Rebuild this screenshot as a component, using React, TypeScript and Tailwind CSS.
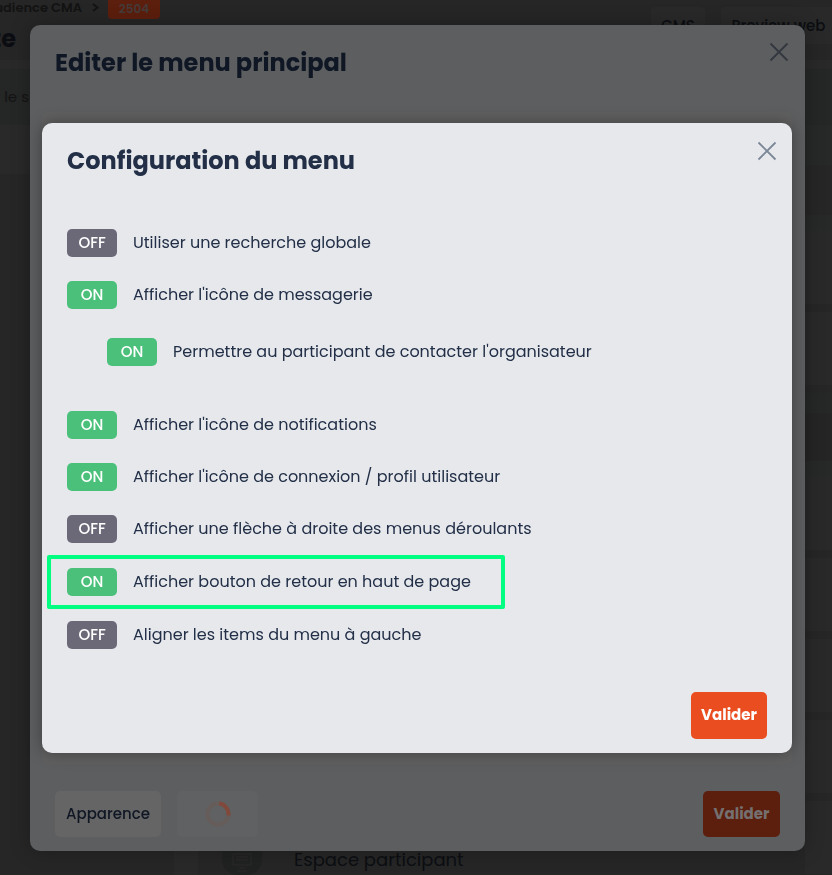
interface Option {
  id: string;
  label: string;
  on: boolean;
  nested?: boolean;
  highlighted?: boolean;
}

const options: Option[] = [
  { id: 'search', label: 'Utiliser une recherche globale', on: false },
  { id: 'messages', label: "Afficher l'icône de messagerie", on: true },
  { id: 'contact', label: "Permettre au participant de contacter l'organisateur", on: true, nested: true },
  { id: 'notifications', label: "Afficher l'icône de notifications", on: true },
  { id: 'profile', label: "Afficher l'icône de connexion / profil utilisateur", on: true },
  { id: 'arrow', label: 'Afficher une flèche à droite des menus déroulants', on: false },
  { id: 'top', label: 'Afficher bouton de retour en haut de page', on: true, highlighted: true },
  { id: 'left', label: 'Aligner les items du menu à gauche', on: false },
];

const CloseButton = ({ className }: { className: string }) => (
  <button type="button" aria-label="Fermer" className={className}>
    <svg width="20" height="20" viewBox="0 0 20 20" fill="none" stroke="currentColor" strokeWidth="1.8">
      <path d="M1.5 1.5 18.5 18.5M18.5 1.5 1.5 18.5" />
    </svg>
  </button>
);

const rowClass = (option: Option) => {
  if (option.highlighted) {
    return '-ml-5 flex h-[54px] w-[458px] max-w-full items-center rounded-xs border-4 border-[#00ff80] pl-4';
  }
  if (option.nested) return 'mt-1 mb-5 ml-10 flex h-[54px] items-center';
  return 'flex h-[52px] items-center';
};

const OptionRow = ({ option }: { option: Option }) => (
  <li className={rowClass(option)}>
    <button
      type="button"
      role="switch"
      aria-checked={option.on}
      aria-labelledby={option.id}
      className={`h-7 w-[50px] shrink-0 rounded-[5px] text-[15px] font-medium text-white ${
        option.on ? 'bg-[#4bc07a]' : 'bg-[#6b6878]'
      }`}
    >
      {option.on ? 'ON' : 'OFF'}
    </button>
    <span id={option.id} className="ml-4 whitespace-nowrap text-base text-[#222f47]">
      {option.label}
    </span>
  </li>
);

const Card = () => <div className="mb-2 h-[73px] shrink-0 bg-[#292929]" />;

// Dimmed page behind the dialogs
const PageBehind = () => (
  <div className="flex h-screen flex-col overflow-hidden bg-[#262626] text-[#0c0e12]">
    <header className="flex h-[60px] shrink-0 justify-between">
      <div>
        <nav className="flex h-[19px] items-center">
          <a href="#" className="flex h-[19px] w-[82px] justify-end whitespace-nowrap text-[13px] font-semibold leading-4 text-[#131313]">
            udience CMA
          </a>
          <svg className="mb-1 ml-2.5 text-[#131313]" width="7" height="9" viewBox="0 0 7 9" fill="none" stroke="currentColor" strokeWidth="1.8">
            <path d="M1 1 5.5 4.5 1 8" />
          </svg>
          <span className="ml-[9px] flex h-[19px] w-[52px] items-center justify-center rounded-b bg-[#5c1e0d] pb-0.5 text-xs font-semibold text-[#453b39]">
            2504
          </span>
        </nav>
        <h1 className="mt-1 flex w-4 justify-end text-2xl font-bold text-[#0b0d12]">te</h1>
      </div>
      <div className="flex gap-4 pt-[7px]">
        <button type="button" className="h-[37px] w-[54px] rounded bg-[#292929] pt-0.5 text-[15px] font-medium">
          CMS
        </button>
        <button type="button" className="h-[37px] w-[111px] whitespace-nowrap rounded-l bg-[#292929] pt-0.5 pl-1 text-[15px] font-medium">
          Preview web
        </button>
      </div>
    </header>
    <div className="h-[9px] shrink-0 bg-[#292929]" />
    <div className="flex h-14 shrink-0 items-center bg-[#252626] text-[15px] text-[#141414]">
      <span className="flex w-[29px] justify-end whitespace-nowrap">r le s</span>
    </div>
    <div className="flex min-h-0 flex-1">
      <div className="flex w-[30px] shrink-0 flex-col">
        <div className="h-[49px] bg-[#292929]" />
      </div>
      <div className="flex flex-1 flex-col justify-end">
        <div className="flex h-6 items-center pl-[144px]">
          <div className="h-6 w-6 bg-[#292929]" />
          <div className="ml-6 flex h-6 w-10 items-center justify-center rounded-b-2xl bg-[#202121] text-[#2a2a2a]">
            <svg width="20" height="20" viewBox="0 0 20 20" fill="none" stroke="currentColor">
              <path d="M1 1h18v11H1zM4 4h12M4 7h12M7 15h6M5 18h10" />
            </svg>
          </div>
          <span className="ml-8 pb-1.5 text-lg leading-5">Espace participant</span>
        </div>
      </div>
      <div className="flex w-[27px] shrink-0 flex-col overflow-hidden">
        <div className="h-10 shrink-0 bg-[#272828]" />
        <div className="h-[50px] shrink-0" />
        <div className="h-4 shrink-0 bg-[#272828]" />
        <Card />
        <Card />
        <div className="h-5 shrink-0 bg-[#262827]" />
        <div className="h-12 shrink-0 bg-[#252525]" />
        <div className="h-4 shrink-0 bg-[#272828]" />
        <Card />
        <Card />
        <Card />
        <Card />
        <Card />
      </div>
    </div>
  </div>
);

const MainMenuDialog = () => (
  <div className="fixed inset-0 flex flex-col pt-[25px] pr-[27px] pb-6 pl-[30px]">
    <section className="flex flex-1 flex-col rounded-[10px] bg-[#5c5e60] shadow-[0_0_20px_rgba(0,0,0,0.25)]">
      <header className="flex h-[87px] shrink-0 items-start justify-between pt-[17px] pr-4 pl-[25px]">
        <h2 className="mt-[3px] text-2xl font-bold leading-9 text-[#101724]">Editer le menu principal</h2>
        <CloseButton className="text-[#34373d]" />
      </header>
      <div className="mr-[13px] ml-3 flex-1 rounded-md bg-[#606060]" />
      <footer className="flex justify-between pt-[27px] pr-[25px] pb-3.5 pl-[25px]">
        <div className="flex gap-4">
          <button type="button" className="h-[46px] w-[106px] rounded-[5px] bg-[#656565] text-[15px] font-medium text-[#101724]">
            Apparence
          </button>
          <button type="button" aria-label="Chargement" className="flex h-[46px] w-[81px] items-center justify-center rounded-[5px] bg-[#606162]">
            <svg width="26" height="26" viewBox="0 0 26 26" fill="none" strokeWidth="4">
              <circle cx="13" cy="13" r="10.5" stroke="#665d5a" />
              <path d="M14.3 2.6A10.5 10.5 0 0 1 23.4 14.5" stroke="#80493b" />
            </svg>
          </button>
        </div>
        <button type="button" className="h-[46px] w-[77px] rounded-[5px] bg-[#5c1e0d] text-[15px] font-bold text-[#757070]">
          Valider
        </button>
      </footer>
    </section>
  </div>
);

const MenuConfigDialog = () => (
  <div className="fixed inset-0 pt-[123px] pr-10 pl-[42px]">
    <section
      role="dialog"
      aria-labelledby="config-title"
      className="rounded-[10px] bg-[#e6e8ec] px-[25px] pt-5 pb-3.5 shadow-[0_0_16px_rgba(0,0,0,0.35)]"
    >
      <header className="flex items-start justify-between">
        <h2 id="config-title" className="text-2xl font-bold leading-9 text-[#222f47]">
          Configuration du menu
        </h2>
        <CloseButton className="-mt-0.5 -mr-2.5 text-[#7b8797]" />
      </header>
      <ul className="mt-[38px]">
        {options.map((option) => (
          <OptionRow key={option.id} option={option} />
        ))}
      </ul>
      <footer className="mt-[31px] flex justify-end">
        <button type="button" className="h-[47px] w-[76px] rounded-[5px] bg-[#ea4d1f] text-[15px] font-bold text-white">
          Valider
        </button>
      </footer>
    </section>
  </div>
);

export default function App() {
  return (
    <div className="font-[Poppins,Inter,sans-serif]">
      <PageBehind />
      <MainMenuDialog />
      <MenuConfigDialog />
    </div>
  );
}
